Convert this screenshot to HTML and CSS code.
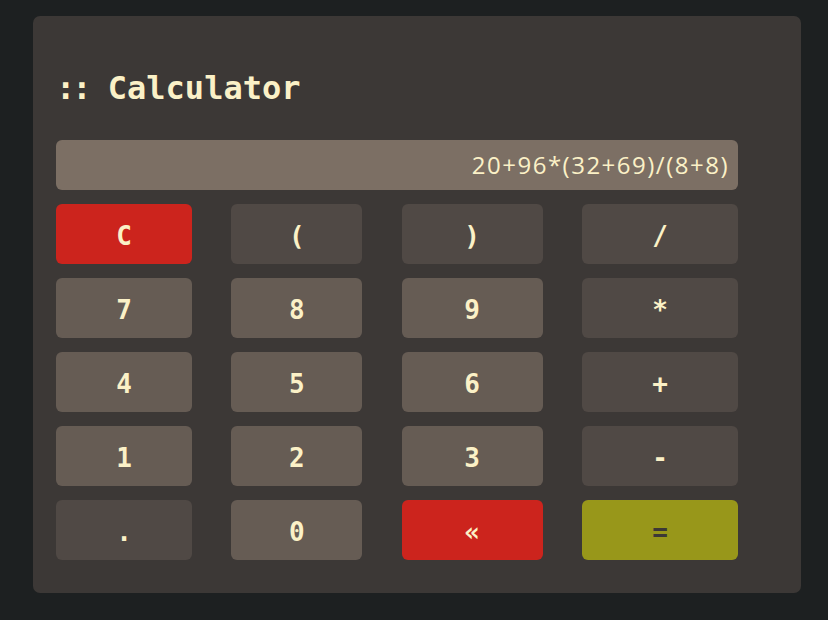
FILE: index.html
```html
<!DOCTYPE html>
<html>
<head>
<meta charset="utf-8">
<link rel="stylesheet" href="styles.css">
</head>
<body>
<div class="card">
  <h1 class="title"><span class="dots">::</span> Calculator</h1>
  <div class="display">20+96*(32+69)/(8+8)</div>
  <div class="keys">
    <button class="key red">C</button>
    <button class="key op">(</button>
    <button class="key op">)</button>
    <button class="key op">/</button>
    <button class="key num">7</button>
    <button class="key num">8</button>
    <button class="key num">9</button>
    <button class="key op">*</button>
    <button class="key num">4</button>
    <button class="key num">5</button>
    <button class="key num">6</button>
    <button class="key op">+</button>
    <button class="key num">1</button>
    <button class="key num">2</button>
    <button class="key num">3</button>
    <button class="key op">-</button>
    <button class="key op">.</button>
    <button class="key num">0</button>
    <button class="key red">«</button>
    <button class="key eq">=</button>
  </div>
</div>
</body>
</html>
```
FILE: styles.css
```css
html, body {
  margin: 0;
  padding: 0;
  background: #1d2021;
}
body {
  padding: 16px 0 0 33px;
}
.card {
  width: 768px;
  height: 577px;
  box-sizing: border-box;
  padding: 54px 63px 0 23px;
  background: #3c3836;
  border-radius: 7px;
}
.title {
  margin: 0 0 34px 0;
  font-family: "DejaVu Sans Mono", monospace;
  font-weight: bold;
  font-size: 32px;
  line-height: 36px;
  color: #fbf1c7;
  white-space: pre;
}
.dots {
  letter-spacing: -3px;
}
.display {
  height: 50px;
  box-sizing: border-box;
  background: #7c6f64;
  border-radius: 6px;
  padding-right: 9px;
  text-align: right;
  font-family: "Open Sans", sans-serif;
  font-size: 24px;
  letter-spacing: 1.5px;
  line-height: 50px;
  color: #fbf1c7;
}
.keys {
  margin-top: 14px;
  display: grid;
  grid-template-columns: 136px 131px 141px 156px;
  grid-auto-rows: 60px;
  justify-content: space-between;
  row-gap: 14px;
}
.key {
  border: none;
  margin: 0;
  padding: 4px 0 0 0;
  border-radius: 6px;
  font-family: "DejaVu Sans Mono", monospace;
  font-weight: bold;
  font-size: 26px;
  color: #fbf1c7;
}
.red { background: #cc241d; }
.op { background: #504945; }
.num { background: #665c54; }
.eq { background: #98971a; color: #3c3836; }
```
